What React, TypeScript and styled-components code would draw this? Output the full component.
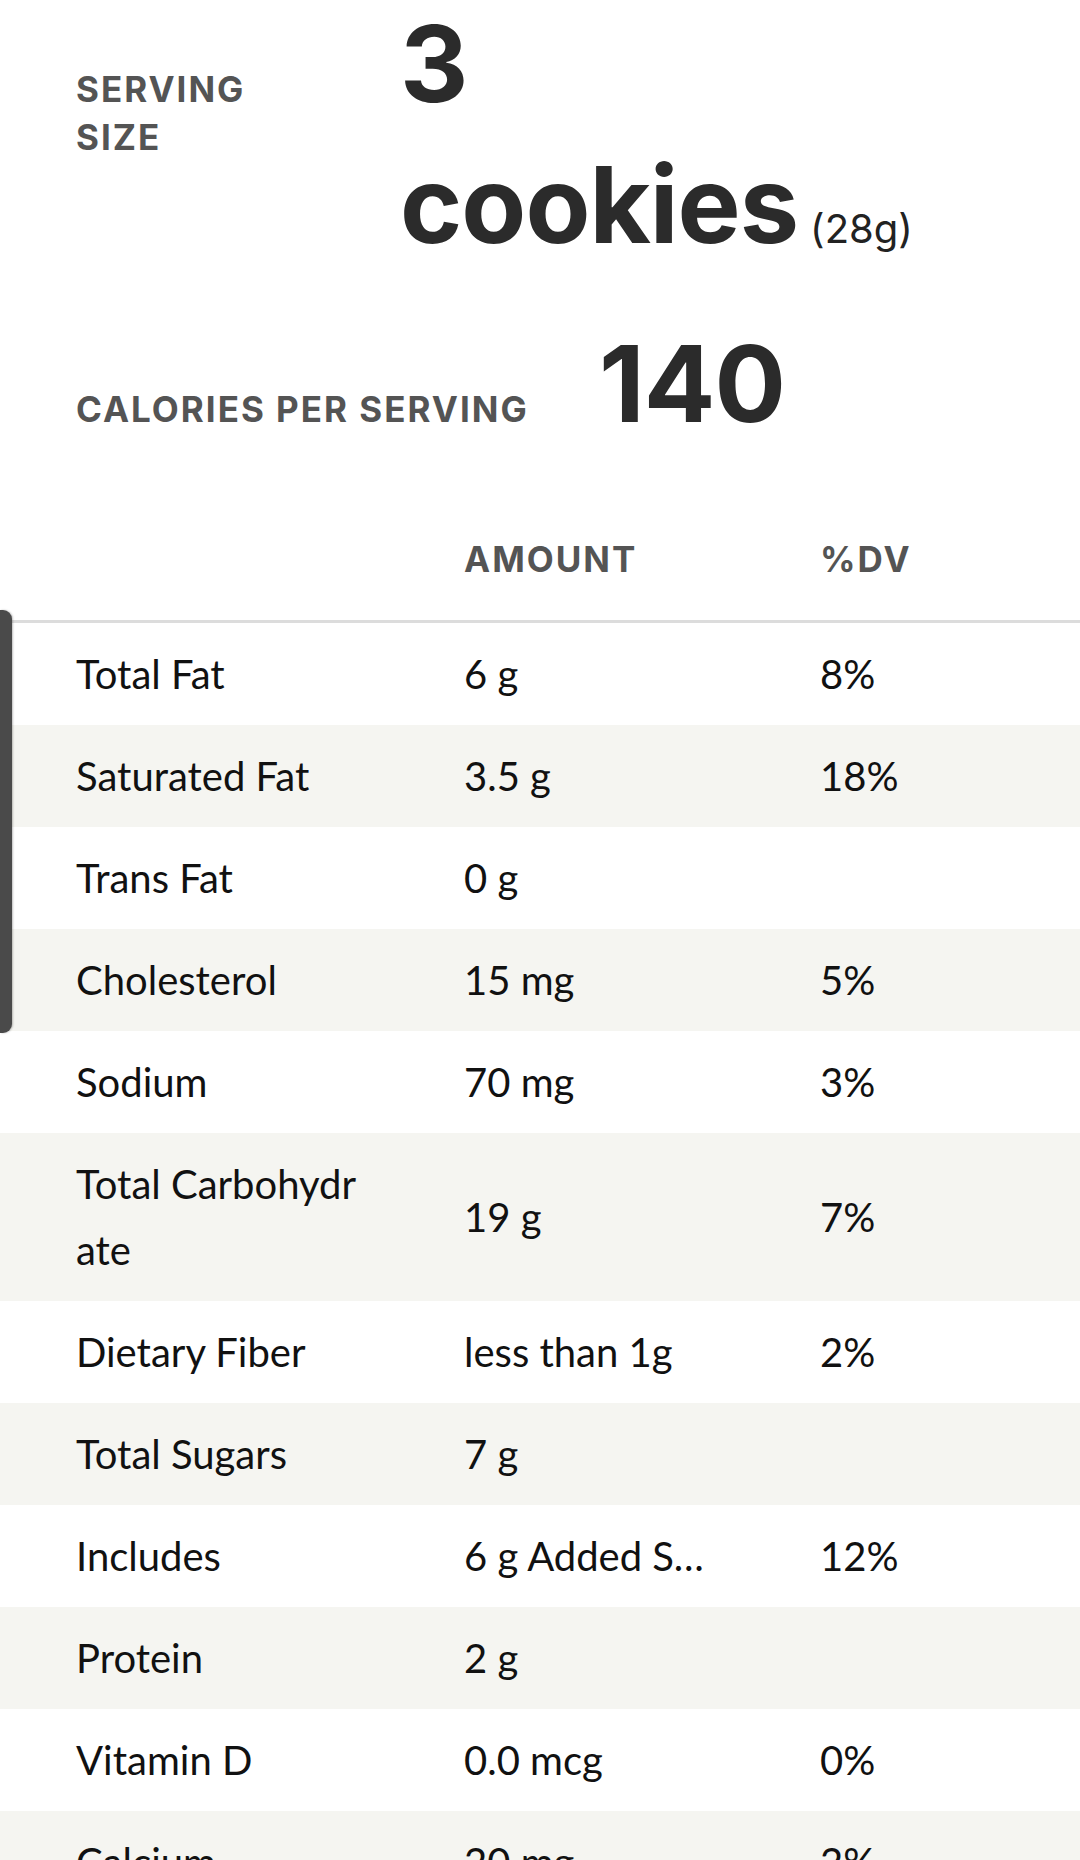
import React from "react";
import styled, { createGlobalStyle } from "styled-components";

const Global = createGlobalStyle`
  html, body { margin: 0; padding: 0; background: #ffffff; }
  body { font-family: Lato, "Noto Sans", sans-serif; color: #111; -webkit-font-smoothing: antialiased; }
`;

const Page = styled.main`
  position: relative;
  width: 1080px;
  overflow: hidden;
`;

const Summary = styled.section`
  padding: 0 0 0 76px;
`;

const ServingRow = styled.div`
  display: grid;
  grid-template-columns: 324px 1fr;
  align-items: baseline;
`;

const Label = styled.div`
  font-family: Inter, "Noto Sans", sans-serif;
  font-weight: 700;
  font-size: 35px;
  line-height: 48px;
  letter-spacing: 2px;
  color: #545454;
  text-transform: uppercase;
`;

const BigValue = styled.div`
  display: flex;
  flex-direction: column;
  gap: 18px;
  padding-top: 2px;
  font-family: Inter, "Noto Sans", sans-serif;
  font-weight: 700;
  font-size: 106px;
  line-height: 123px;
  letter-spacing: -1px;
  color: #2b2b2b;
`;

const BigLine = styled.div``;

const Grams = styled.span`
  font-family: Inter, "Noto Sans", sans-serif;
  font-weight: 400;
  font-size: 40px;
  letter-spacing: 0;
  color: #222;
  margin-left: 12px;
`;

const CaloriesRow = styled.div`
  display: grid;
  grid-template-columns: 523px auto;
  align-items: baseline;
  margin-top: 30px;
`;

const CalValue = styled.div`
  font-family: Inter, "Noto Sans", sans-serif;
  font-weight: 700;
  font-size: 106px;
  line-height: 127px;
  letter-spacing: -1px;
  color: #2b2b2b;
`;

const Table = styled.section`
  margin-top: 92px;
`;

const HeadRow = styled.div`
  display: grid;
  grid-template-columns: 388px 356px 1fr;
  padding: 0 0 41px 76px;
  border-bottom: 3px solid #dcdcdc;
`;

const HeadCell = styled(Label)`
  line-height: 40px;
`;

const Row = styled.div<{ $shaded: boolean }>`
  display: grid;
  grid-template-columns: 388px 356px 1fr;
  align-items: center;
  padding: 18px 0 18px 76px;
  background: ${(p) => (p.$shaded ? "#f5f5f1" : "#ffffff")};
  font-size: 40px;
  line-height: 66px;
  color: #111;
`;

const Name = styled.div`
  padding-right: 70px;
`;

const Amount = styled.div`
  padding-right: 96px;
  white-space: nowrap;
  overflow: hidden;
  text-overflow: ellipsis;
`;

const Dv = styled.div``;

const ScrollTab = styled.div`
  position: absolute;
  left: 0;
  top: 610px;
  width: 12px;
  height: 423px;
  background: #4a4a4a;
  border-radius: 0 9px 9px 0;
  box-shadow: 1px 0 2px rgba(0, 0, 0, 0.25);
`;

type Nutrient = { name: string[]; amount: string; dv: string };

const nutrients: Nutrient[] = [
  { name: ["Total Fat"], amount: "6 g", dv: "8%" },
  { name: ["Saturated Fat"], amount: "3.5 g", dv: "18%" },
  { name: ["Trans Fat"], amount: "0 g", dv: "" },
  { name: ["Cholesterol"], amount: "15 mg", dv: "5%" },
  { name: ["Sodium"], amount: "70 mg", dv: "3%" },
  { name: ["Total Carbohydr", "ate"], amount: "19 g", dv: "7%" },
  { name: ["Dietary Fiber"], amount: "less than 1g", dv: "2%" },
  { name: ["Total Sugars"], amount: "7 g", dv: "" },
  { name: ["Includes"], amount: "6 g Added Sugars", dv: "12%" },
  { name: ["Protein"], amount: "2 g", dv: "" },
  { name: ["Vitamin D"], amount: "0.0 mcg", dv: "0%" },
  { name: ["Calcium"], amount: "20 mg", dv: "2%" },
];

export default function App() {
  return (
    <Page>
      <Global />
      <Summary>
        <ServingRow>
          <Label>
            Serving
            <br />
            Size
          </Label>
          <BigValue>
            <BigLine>3</BigLine>
            <BigLine>
              cookies<Grams>(28g)</Grams>
            </BigLine>
          </BigValue>
        </ServingRow>
        <CaloriesRow>
          <Label>Calories per serving</Label>
          <CalValue>140</CalValue>
        </CaloriesRow>
      </Summary>
      <Table>
        <HeadRow>
          <HeadCell />
          <HeadCell>Amount</HeadCell>
          <HeadCell>%DV</HeadCell>
        </HeadRow>
        {nutrients.map((n, i) => (
          <Row key={n.name.join("")} $shaded={i % 2 === 1}>
            <Name>
              {n.name.map((line, j) => (
                <React.Fragment key={j}>
                  {j > 0 && <br />}
                  {line}
                </React.Fragment>
              ))}
            </Name>
            <Amount>{n.amount}</Amount>
            <Dv>{n.dv}</Dv>
          </Row>
        ))}
      </Table>
      <ScrollTab />
    </Page>
  );
}
